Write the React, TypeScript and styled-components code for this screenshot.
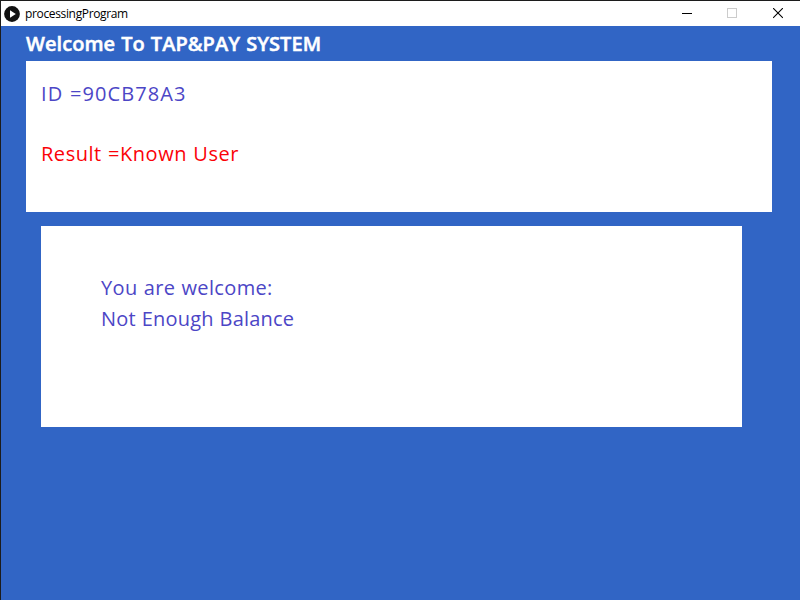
import React from "react";
import styled, { createGlobalStyle } from "styled-components";

const GlobalStyle = createGlobalStyle`
  * { box-sizing: border-box; }
  body { margin: 0; overflow: hidden; }
`;

const Window = styled.div`
  width: 800px;
  height: 600px;
  display: flex;
  flex-direction: column;
  border-top: 1px solid #1c1c1c;
  border-left: 1px solid #1c1c1c;
  background: #3165c5;
  font-family: "Open Sans", "Noto Sans", sans-serif;
`;

const TitleBar = styled.header`
  height: 25px;
  flex: none;
  display: flex;
  align-items: center;
  background: #fff;
  padding-left: 3px;
`;

const Caption = styled.span`
  flex: 1;
  margin-left: 5px;
  font-size: 12px;
  line-height: 24px;
  letter-spacing: -0.35px;
  color: #000;
`;

const Control = styled.button<{ $width?: number }>`
  width: ${({ $width = 46 }) => $width}px;
  height: 25px;
  padding: 0 17px 0 0;
  border: 0;
  background: transparent;
  display: flex;
  align-items: center;
  justify-content: flex-end;
`;

const Sketch = styled.main`
  display: flex;
  flex-direction: column;
  align-items: flex-start;
`;

const Heading = styled.h1`
  margin: 0 0 0 25px;
  height: 35px;
  font-size: 20px;
  font-weight: 600;
  line-height: 35px;
  letter-spacing: 0.05px;
  word-spacing: 0.8px;
  white-space: pre;
  color: #fff;
  -webkit-text-stroke: 0.5px #fff;
`;

const IdPanel = styled.section`
  width: 746px;
  height: 151px;
  margin-left: 25px;
  padding: 18px 15px;
  background: #fff;
  display: flex;
  flex-direction: column;
  gap: 30px;
`;

const MessagePanel = styled.section`
  width: 701px;
  height: 201px;
  margin: 14px 0 0 40px;
  padding: 47px 60px;
  background: #fff;
  display: flex;
  flex-direction: column;
  gap: 1px;
`;

const Line = styled.p<{ $tone?: "error"; $spacing: number }>`
  margin: 0;
  font-size: 20px;
  line-height: 30px;
  white-space: pre;
  letter-spacing: ${({ $spacing }) => $spacing}px;
  word-spacing: 0.6px;
  color: ${({ $tone }) => ($tone === "error" ? "#fb0207" : "#4c46c6")};
`;

export default function App() {
  return (
    <>
      <GlobalStyle />
      <Window>
        <TitleBar>
          <svg width="16" height="16" viewBox="0 0 16 16">
            <circle cx="8" cy="8" r="7.9" fill="#111" />
            <path d="M6 4.3 11.8 8 6 11.7Z" fill="#fff" />
          </svg>
          <Caption>processingProgram</Caption>
          <Control aria-label="Minimize">
            <svg width="10" height="11" shapeRendering="crispEdges">
              <rect y="5" width="10" height="1" fill="#000" />
            </svg>
          </Control>
          <Control aria-label="Maximize" $width={45}>
            <svg width="10" height="11" shapeRendering="crispEdges">
              <rect x="0.5" y="0.5" width="9" height="9" fill="none" stroke="#ccc" />
            </svg>
          </Control>
          <Control aria-label="Close">
            <svg width="10" height="11">
              <path d="M0.1 0.1 9.9 9.9M9.9 0.1 0.1 9.9" stroke="#000" strokeWidth="1.1" />
            </svg>
          </Control>
        </TitleBar>
        <Sketch>
          <Heading>Welcome To TAP&amp;PAY SYSTEM</Heading>
          <IdPanel>
            <Line $spacing={1.07}>ID =90CB78A3</Line>
            <Line $tone="error" $spacing={0.53}>Result =Known User</Line>
          </IdPanel>
          <MessagePanel>
            <Line $spacing={0.36}>You are welcome:</Line>
            <Line $spacing={0.18}>Not Enough Balance</Line>
          </MessagePanel>
        </Sketch>
      </Window>
    </>
  );
}
